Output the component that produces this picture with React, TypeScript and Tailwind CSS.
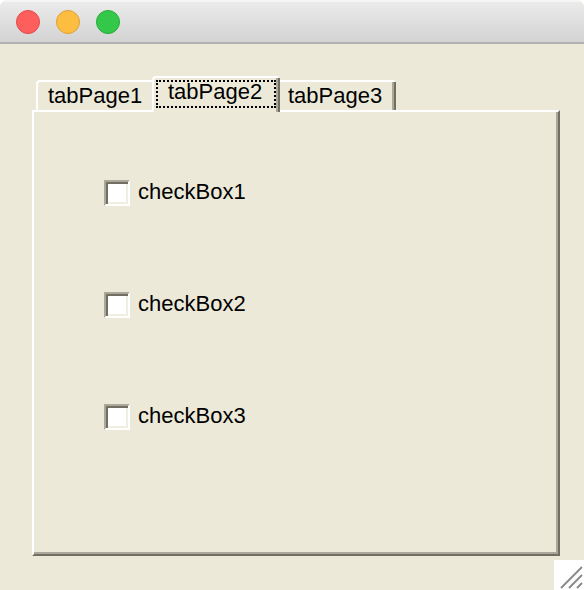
import React, { useState } from "react";

const tabs = ["tabPage1", "tabPage2", "tabPage3"];

const tabStyles = [
  "ml-1 h-[30px] w-[118px] -mr-[2px] rounded-tl-[4px] border-t-2 border-l-2 border-white pl-[10px] pt-[2px]",
  "-mb-[2px] h-9 w-[128px] rounded-t-[4px] border-t-2 border-l-2 border-white pl-[2px] pt-[2px]",
  "h-[30px] w-[116px] rounded-tr-[4px] border-t-2 border-white pl-[8px] pt-[2px]",
];

function Edge() {
  return (
    <span className="absolute top-0 right-0 bottom-0 w-1 border-r-2 border-l-2 border-r-[#716f64] border-l-[#aca899]" />
  );
}

export default function App() {
  const [checked, setChecked] = useState([false, false, false]);
  return (
    <div className="bg-white">
      <div className="flex min-h-screen flex-col overflow-hidden rounded-t-lg bg-[#ece9d8] font-['Liberation_Sans',Arial,sans-serif] text-[22px] leading-6 text-black">
        <header className="flex h-11 shrink-0 items-center gap-4 border-t-2 border-b-2 border-t-[#f5f5f5] border-b-[#b1b1b1] bg-linear-to-b from-[#ebebeb] to-[#d3d3d3] px-4">
          <button aria-label="Close" className="size-6 rounded-full border border-[#e2494b] bg-[#fe5f5c]" />
          <button aria-label="Minimize" className="size-6 rounded-full border border-[#e0a035] bg-[#fdbd40]" />
          <button aria-label="Zoom" className="size-6 rounded-full border border-[#27ab35] bg-[#34c84a]" />
        </header>
        <main className="flex flex-1 flex-col pt-8 pr-6 pb-1 pl-8">
          <div role="tablist" className="flex items-end">
            {tabs.map((name, i) => (
              <button
                key={name}
                role="tab"
                aria-selected={i === 1}
                className={`relative flex items-start bg-[#ece9d8] text-left ${tabStyles[i]}`}
              >
                {i === 1 ? (
                  <span className="block h-7 w-[120px] border-2 border-dotted border-black pl-[10px] leading-5">
                    {name}
                  </span>
                ) : (
                  <span>{name}</span>
                )}
                {i > 0 && <Edge />}
              </button>
            ))}
          </div>
          <section
            role="tabpanel"
            aria-label="tabPage2"
            className="flex-1 border-2 border-t-white border-r-[#716f64] border-b-[#716f64] border-l-white shadow-[inset_-2px_-2px_#aca899]"
          >
            <div className="flex flex-col items-start gap-[86px] pt-[68px] pl-[70px]">
              {["checkBox1", "checkBox2", "checkBox3"].map((name, i) => (
                <label key={name} className="flex h-[26px] items-start gap-2">
                  <input
                    type="checkbox"
                    checked={checked[i]}
                    onChange={() => setChecked(checked.map((c, j) => (j === i ? !c : c)))}
                    className="size-[26px] appearance-none border-2 border-t-[#aca899] border-r-white border-b-white border-l-[#aca899] bg-white shadow-[inset_2px_2px_#716f64,inset_-2px_-2px_#f1efe2] checked:bg-[#716f64]"
                  />
                  {name}
                </label>
              ))}
            </div>
          </section>
        </main>
        <footer className="flex justify-end">
          <svg viewBox="0 0 30 30" className="size-[30px] bg-white" stroke="#8c8c8c" strokeWidth="2" fill="none">
            <path d="M7 28 L28 7 M15 28 L28 15 M23 28 L28 23" />
          </svg>
        </footer>
      </div>
    </div>
  );
}
